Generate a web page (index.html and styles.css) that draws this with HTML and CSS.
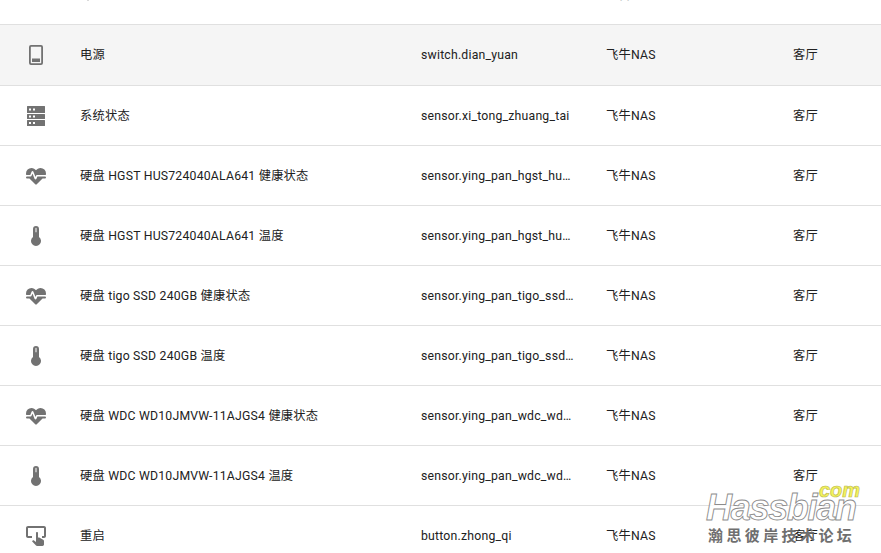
FILE: index.html
```html
<!DOCTYPE html>
<html lang="zh">
<head>
<meta charset="utf-8">
<title>实体</title>
<link rel="stylesheet" href="styles.css">
</head>
<body>
<svg class="defs" width="0" height="0" aria-hidden="true">
  <symbol id="i-battery" viewBox="0 0 24 24"><path fill-rule="evenodd" d="M7 2h10a2 2 0 0 1 2 2v16a2 2 0 0 1-2 2H7a2 2 0 0 1-2-2V4a2 2 0 0 1 2-2zm.2 1.800a.4.4 0 0 0-.4.4v15.600c0 .2.2.4.4.4h9.600c.2 0 .4-.2.4-.4V4.200a.4.4 0 0 0-.4-.4zM8 15.500h8V19H8z"/></symbol>
  <symbol id="i-server" viewBox="0 0 24 24"><path fill-rule="evenodd" d="M3.500 2h17a.5.5 0 0 1 .5.500v6a.5.5 0 0 1-.5.500h-17a.5.5 0 0 1-.5-.500v-6a.5.5 0 0 1 .5-.500zM5 4.500v2h2v-2zm4 0v2h2v-2zM3.500 10h17a.5.5 0 0 1 .5.500v4a.5.5 0 0 1-.5.500h-17a.5.5 0 0 1-.5-.500v-4a.5.5 0 0 1 .5-.500zM5 11.500v2h2v-2zm4 0v2h2v-2zM3.500 16h17a.5.5 0 0 1 .5.500v5a.5.5 0 0 1-.5.500h-17a.5.5 0 0 1-.5-.500v-5a.5.5 0 0 1 .5-.500zM5 18v2h2v-2zm4 0v2h2v-2z"/></symbol>
  <symbol id="i-pulse" viewBox="0 0 24 24"><path d="M7.500,4A5.500,5.500 0 0,0 2,9.500C2,10 2.090,10.500 2.220,11H6.270L7.570,7.630C7.870,6.830 9.050,6.750 9.430,7.630L11.500,13L12.090,11.580C12.220,11.250 12.570,11 13,11H21.780C21.910,10.500 22,10 22,9.500A5.500,5.500 0 0,0 16.500,4C14.640,4 13,4.930 12,6.340C11,4.930 9.360,4 7.500,4M3,12.500A1,1 0 0,0 2,13.500A1,1 0 0,0 3,14.500H5.440L11,20C12,20.900 12,20.900 13,20L18.560,14.500H21A1,1 0 0,0 22,13.500A1,1 0 0,0 21,12.500H13.400L12.470,14.800C12.070,15.810 10.920,15.670 10.550,14.830L8.500,9.500L7.540,11.830C7.390,12.210 7.050,12.500 6.600,12.500H3Z"/></symbol>
  <symbol id="i-thermo" viewBox="0 0 24 24"><path fill-rule="evenodd" d="M15 13V5a3 3 0 0 0-6 0v8a5 5 0 1 0 6 0zM12 3.800a.5.5 0 0 1 .5.500v4h-1v-4a.5.5 0 0 1 .5-.500z"/></symbol>
  <symbol id="i-gesture" viewBox="0 0 24 24"><path d="M20 20.500C19.970 21.320 19.320 21.970 18.500 22H13C12.620 22 12.260 21.850 12 21.570L8 17.370L8.740 16.600C8.930 16.390 9.200 16.280 9.500 16.280H9.700L12 18V9C12 8.450 12.450 8 13 8S14 8.450 14 9V13.470L15.210 13.600L19.150 15.790C19.680 16.030 20 16.560 20 17.140V20.500M20 2H4C2.900 2 2 2.900 2 4V12C2 13.110 2.900 14 4 14H8V12L4 12L4 4H20L20 12H18V14H20V13.960L20.040 14C21.130 14 22 13.090 22 12V4C22 2.900 21.110 2 20 2Z"/></symbol>
  <symbol id="i-arrow" viewBox="0 0 24 24"><path d="M13 20h-2V8l-5.500 5.500-1.420-1.420L12 4.160l7.920 7.920-1.420 1.420L13 8z"/></symbol>
</svg>

<main class="table">
  <div class="row row-head">
    <span class="cell-icon"></span>
    <span class="cell-name head-name"><svg class="arrow"><use href="#i-arrow"/></svg>名称</span>
    <span class="cell-entity">实体标识符</span>
    <span class="cell-device">设备</span>
    <span class="cell-area">区域</span>
  </div>
  <div class="row row-hover">
    <span class="cell-icon"><svg class="icon"><use href="#i-battery"/></svg></span>
    <span class="cell-name">电源</span>
    <span class="cell-entity">switch.dian_yuan</span>
    <span class="cell-device">飞牛NAS</span>
    <span class="cell-area">客厅</span>
  </div>
  <div class="row">
    <span class="cell-icon"><svg class="icon"><use href="#i-server"/></svg></span>
    <span class="cell-name">系统状态</span>
    <span class="cell-entity">sensor.xi_tong_zhuang_tai</span>
    <span class="cell-device">飞牛NAS</span>
    <span class="cell-area">客厅</span>
  </div>
  <div class="row">
    <span class="cell-icon"><svg class="icon"><use href="#i-pulse"/></svg></span>
    <span class="cell-name">硬盘 HGST HUS724040ALA641 健康状态</span>
    <span class="cell-entity">sensor.ying_pan_hgst_hus724040ala641</span>
    <span class="cell-device">飞牛NAS</span>
    <span class="cell-area">客厅</span>
  </div>
  <div class="row">
    <span class="cell-icon"><svg class="icon"><use href="#i-thermo"/></svg></span>
    <span class="cell-name">硬盘 HGST HUS724040ALA641 温度</span>
    <span class="cell-entity">sensor.ying_pan_hgst_hus724040ala641_2</span>
    <span class="cell-device">飞牛NAS</span>
    <span class="cell-area">客厅</span>
  </div>
  <div class="row">
    <span class="cell-icon"><svg class="icon"><use href="#i-pulse"/></svg></span>
    <span class="cell-name">硬盘 tigo SSD 240GB 健康状态</span>
    <span class="cell-entity">sensor.ying_pan_tigo_ssd_240gb</span>
    <span class="cell-device">飞牛NAS</span>
    <span class="cell-area">客厅</span>
  </div>
  <div class="row">
    <span class="cell-icon"><svg class="icon"><use href="#i-thermo"/></svg></span>
    <span class="cell-name">硬盘 tigo SSD 240GB 温度</span>
    <span class="cell-entity">sensor.ying_pan_tigo_ssd_240gb_2</span>
    <span class="cell-device">飞牛NAS</span>
    <span class="cell-area">客厅</span>
  </div>
  <div class="row">
    <span class="cell-icon"><svg class="icon"><use href="#i-pulse"/></svg></span>
    <span class="cell-name">硬盘 WDC WD10JMVW-11AJGS4 健康状态</span>
    <span class="cell-entity">sensor.ying_pan_wdc_wd10jmvw</span>
    <span class="cell-device">飞牛NAS</span>
    <span class="cell-area">客厅</span>
  </div>
  <div class="row">
    <span class="cell-icon"><svg class="icon"><use href="#i-thermo"/></svg></span>
    <span class="cell-name">硬盘 WDC WD10JMVW-11AJGS4 温度</span>
    <span class="cell-entity">sensor.ying_pan_wdc_wd10jmvw_2</span>
    <span class="cell-device">飞牛NAS</span>
    <span class="cell-area">客厅</span>
  </div>
  <div class="row">
    <span class="cell-icon"><svg class="icon"><use href="#i-gesture"/></svg></span>
    <span class="cell-name">重启</span>
    <span class="cell-entity">button.zhong_qi</span>
    <span class="cell-device">飞牛NAS</span>
    <span class="cell-area">客厅</span>
  </div>
</main>

<div class="watermark">
  <span class="wm-brand">Hassbian</span>
  <span class="wm-com">com</span>
  <span class="wm-cn">瀚思彼岸技术论坛</span>
</div>
</body>
</html>
```
FILE: styles.css
```css
* { box-sizing: border-box; }
html, body { margin: 0; height: 100%; overflow: hidden; background: #fff; }
.defs { display: block; height: 0; }
.table { margin-top: -35px; font: 12.25px/16px Roboto, "Noto Sans CJK SC", sans-serif; color: #212121; letter-spacing: .21px; }
.row { display: grid; grid-template-columns: 72px 341px 185px 187px 96px; height: 60px; border-bottom: 1px solid #e0e0e0; align-items: center; }
.row-hover { background: #f5f5f5; height: 61px; }
.row-head { font-weight: 500; }
.head-name { display: flex; align-items: center; gap: 5px; }
.arrow { width: 16px; height: 16px; fill: #212121; flex: none; }
.cell-icon { display: flex; justify-content: center; }
.icon { width: 24px; height: 24px; fill: #727272; }
.cell-name { padding-left: 8px; white-space: nowrap; }
.cell-entity { padding-left: 8px; padding-right: 24px; white-space: nowrap; overflow: hidden; text-overflow: ellipsis; }
.cell-device, .cell-area { padding-left: 8px; white-space: nowrap; }
.watermark { position: absolute; left: 706px; top: 483px; width: 175px; height: 70px; }
.wm-com { position: absolute; left: 113px; top: -3px; font: italic bold 20px/20px "Liberation Sans", sans-serif; color: #f4f35c; -webkit-text-stroke: .6px #b9b74c; }
.wm-brand { position: absolute; left: 0; top: 5px; font: italic bold 36px/40px "Liberation Sans", sans-serif; color: rgba(255,255,255,.85); -webkit-text-stroke: .9px #8c8c8c; letter-spacing: -1.3px; }
.wm-cn { position: absolute; left: 2px; top: 43px; font: bold 15px/18px "Noto Sans CJK SC", sans-serif; color: #6f6f6f; letter-spacing: 3.400px; white-space: nowrap; }
```
